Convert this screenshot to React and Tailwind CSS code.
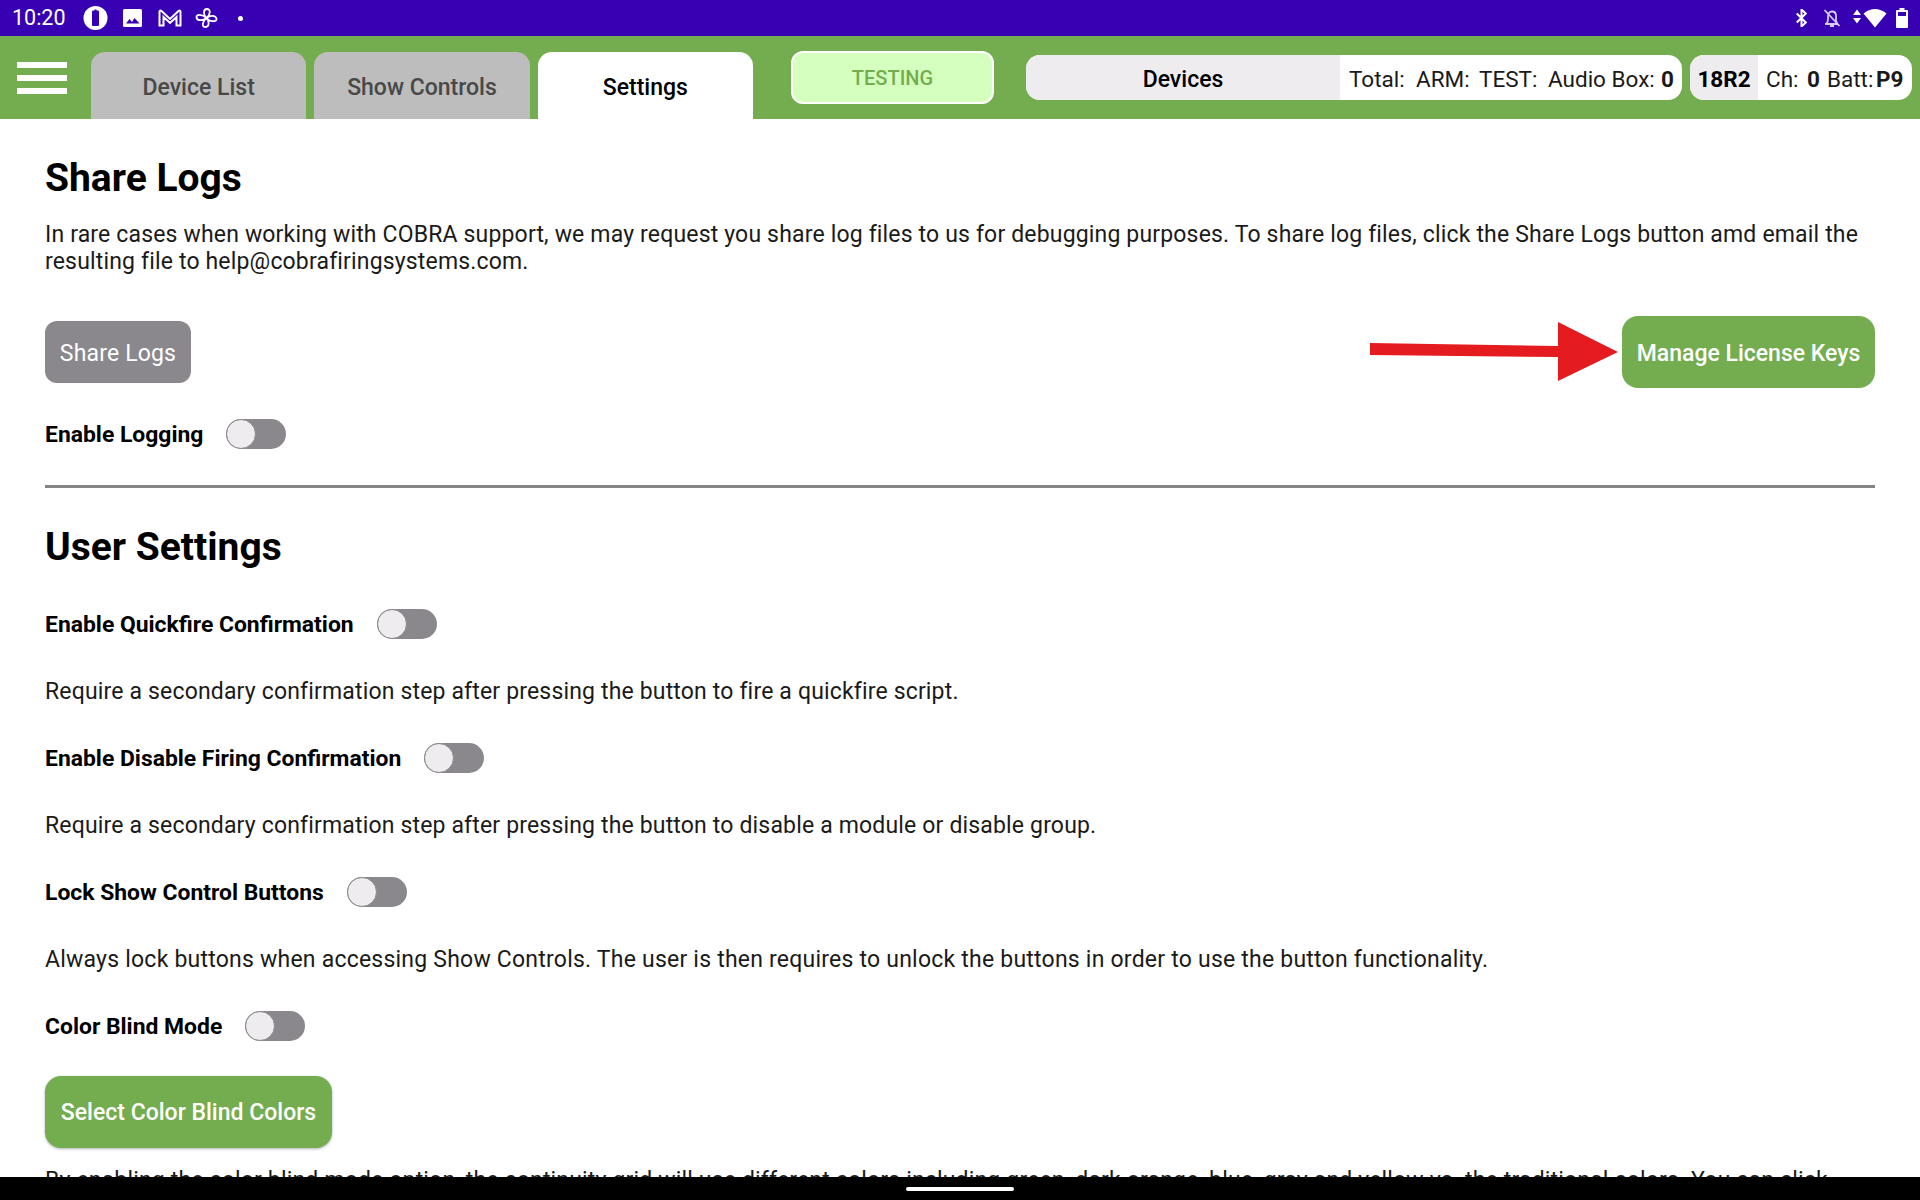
import React from "react";

const Toggle = () => (
  <div className="flex h-[30px] w-[60px] shrink-0 rounded-full bg-[#8a888c]">
    <div className="h-[30px] w-[30px] rounded-full border border-[#8a888c] bg-[#efecef]"></div>
  </div>
);

const ToggleRow = ({ label, className = "" }) => (
  <div className={`flex h-[30px] items-center gap-[23px] ${className}`}>
    <span className="text-[22.9px] font-bold leading-[27px] text-black">{label}</span>
    <Toggle />
  </div>
);

const Desc = ({ children, className = "tracking-[0.165px]" }) => (
  <p className={`text-[23px] leading-[27px] text-[#1a1a1a] ${className}`}>{children}</p>
);

const StatusBar = () => (
  <div className="flex h-9 shrink-0 items-center justify-between bg-[#3700b3] pl-[12px] pr-3 text-white">
    <div className="flex items-center">
      <span className="w-[53px] text-[21.5px] leading-none">10:20</span>
      {/* battery saver */}
      <svg className="ml-[18px]" width="25" height="24" viewBox="0 0 25 24">
        <circle cx="12.5" cy="12" r="12" fill="#fff" />
        <path d="M10 4.5h1.5V3.5h2v1H15a1 1 0 0 1 1 1V19a1 1 0 0 1-1 1h-5a1 1 0 0 1-1-1V5.5a1 1 0 0 1 1-1z" fill="#3700b3" />
      </svg>
      {/* photo */}
      <svg className="ml-[15px]" width="19" height="18" viewBox="0 0 19 18">
        <rect width="19" height="18" rx="1.5" fill="#fff" />
        <path d="M3 14.5l3.5-4.5 2.5 3 2.5-4 5 5.5z" fill="#3700b3" />
      </svg>
      {/* gmail */}
      <svg className="ml-[16px]" width="24" height="18" viewBox="0 0 24 18" fill="none" stroke="#fff" strokeWidth="2">
        <path d="M1.5 16.5V2.5a1 1 0 0 1 1.7-.7L12 10l8.8-8.2a1 1 0 0 1 1.7.7v14h-4V8L12 14 5.500 8v8.500z" />
      </svg>
      {/* fan */}
      <svg className="ml-[13px]" width="23" height="20" viewBox="0 0 23 20" fill="none" stroke="#fff" strokeWidth="1.8">
        <path d="M11.500 10C8 7 8 1 12 1c4 0 3.500 6-.5 9zM11.500 10c3.500-3 9-3 10 .5.800 3.500-6 4-10-.5zM11.500 10c3 3.500 3 9-1 9s-3.500-5.500 1-9zM11.500 10C8 13 2 13 1.500 9.500 1 6 7.500 6 11.500 10z" />
      </svg>
      <div className="ml-[20px] h-[5px] w-[5px] rounded-full bg-white"></div>
    </div>
    <div className="flex items-center">
      {/* bluetooth */}
      <svg width="11" height="18" viewBox="0 0 11 18" fill="none" stroke="#fff" strokeWidth="2">
        <path d="M0.800 4.500l9 9L5.500 17.500V0.500l4.300 4-9 9" />
      </svg>
      {/* bell off */}
      <svg className="ml-[16px]" width="18" height="18" viewBox="0 0 18 18" fill="none" stroke="#fff" strokeWidth="1.800" opacity="0.8">
        <path d="M2 15h12.500M3.500 15c1-1.500 1.500-3 1.500-5V7c0-2.500 1.500-4.500 4-4.500S13 4.500 13 7v5l1.500 3M7 17h4M1.500 1l15 16" />
      </svg>
      {/* wifi with arrows */}
      <svg className="ml-[12px]" width="34" height="19" viewBox="0 0 34 19">
        <path d="M4 0.500L8 6H0zM4 14.500L0 9h8zM10.500 4.500C14 1.500 18 0 22 0s8 1.500 11.500 4.500L22 18.500z" fill="#fff" />
      </svg>
      {/* battery */}
      <svg className="ml-[9px]" width="12" height="20" viewBox="0 0 12 20">
        <path d="M3.500 0h5v2H11a1 1 0 0 1 1 1v16a1 1 0 0 1-1 1H1a1 1 0 0 1-1-1V3a1 1 0 0 1 1-1h2.500z" fill="#fff" />
        <rect x="2" y="4" width="8" height="4" fill="#3700b3" />
      </svg>
    </div>
  </div>
);

const Tab = ({ label, active }) => (
  <div
    className={`flex h-[67px] w-[215.33px] items-center justify-center self-end rounded-t-[14px] pt-[6px] text-[23px] font-medium ${
      active ? "bg-white text-black" : "bg-[#bdbdbd] text-[#484848]"
    }`}
  >
    {label}
  </div>
);

const Header = () => (
  <div className="flex h-[83px] shrink-0 items-center bg-[#74ad4f] pl-[17px]">
    {/* Menu */}
    <div className="flex w-[50px] flex-col gap-[7px]">
      <div className="h-[6px] bg-white"></div>
      <div className="h-[6px] bg-white"></div>
      <div className="h-[6px] bg-white"></div>
    </div>

    {/* Tabs */}
    <div className="ml-[24px] flex h-full gap-2">
      <Tab label="Device List" />
      <Tab label="Show Controls" />
      <Tab label="Settings" active />
    </div>

    <div className="ml-[38px] flex h-[53px] w-[203px] items-center justify-center rounded-[12px] border-2 border-white bg-[#d4ffbf] text-[20px] font-medium text-[#74ad4f]">
      TESTING
    </div>

    {/* Devices */}
    <div className="ml-[32px] flex h-[45px] w-[656px] overflow-hidden rounded-[14px] bg-white text-[22.5px] text-[#1a1a1a]">
      <div className="flex w-[314px] items-center justify-center bg-[#efecef] pt-[5px] text-[23px] font-medium text-black">
        Devices
      </div>
      <div className="flex flex-1 items-center pl-[9px] pt-[4px]">
        <span className="w-[67px]">Total:</span>
        <span className="w-[63px]">ARM:</span>
        <span className="w-[69px]">TEST:</span>
        <span className="w-[113px]">Audio Box:</span>
        <span className="font-bold">0</span>
      </div>
    </div>

    <div className="ml-2 flex h-[45px] w-[222px] overflow-hidden rounded-[14px] bg-white text-[22.5px] text-[#1a1a1a]">
      <div className="flex w-[68px] items-center justify-center bg-[#efecef] pt-[4px] font-bold text-black">18R2</div>
      <div className="flex flex-1 items-center pl-[8px] pt-[4px]">
        <span className="w-[41px]">Ch:</span>
        <span className="w-[20px] font-bold">0</span>
        <span className="w-[49px]">Batt:</span>
        <span className="font-bold">P9</span>
      </div>
    </div>
  </div>
);

const App = () => {
  return (
    <div className="flex h-[1200px] w-[1920px] flex-col overflow-hidden bg-white font-['Roboto',sans-serif]">
      <StatusBar />
      <Header />

      {/* Content */}
      <div className="flex-1 overflow-hidden px-[45px] pt-[37px]">
        <h1 className="text-[39px] font-bold leading-[44px] text-black">Share Logs</h1>
        <div className="mt-[21px]">
          <Desc>
            In rare cases when working with COBRA support, we may request you share log files to us for debugging
            purposes. To share log files, click the Share Logs button amd email the resulting file to
            help@cobrafiringsystems.com.
          </Desc>
        </div>

        <div className="mt-[41px] flex items-center justify-between">
          <button className="flex h-[62px] w-[146px] items-center justify-center rounded-[12px] bg-[#8a888c] pt-[5px] text-[23px] tracking-[0.165px] text-white">
            Share Logs
          </button>
          <div className="flex items-center gap-1">
            {/* Red arrow */}
            <svg width="248" height="60" viewBox="0 0 248 60">
              <path d="M0 21L188 24V0L248 30 188 59V35L0 33z" fill="#e51c1f" />
            </svg>
            <button className="flex h-[72px] w-[253px] items-center justify-center rounded-[16px] bg-[#74ad4f] pt-[5px] text-[23px] font-medium text-white">
              Manage License Keys
            </button>
          </div>
        </div>

        <ToggleRow label="Enable Logging" className="mt-[31px]" />

        <div className="mt-[36px] h-[3px] bg-[#858585]"></div>

        <h1 className="mt-[37px] text-[39px] font-bold leading-[44px] text-black">User Settings</h1>

        <ToggleRow label="Enable Quickfire Confirmation" className="mt-[40px]" />
        <div className="mt-[39px]">
          <Desc>Require a secondary confirmation step after pressing the button to fire a quickfire script.</Desc>
        </div>
        <ToggleRow label="Enable Disable Firing Confirmation" className="mt-[38px]" />
        <div className="mt-[39px]">
          <Desc>Require a secondary confirmation step after pressing the button to disable a module or disable group.</Desc>
        </div>
        <ToggleRow label="Lock Show Control Buttons" className="mt-[38px]" />
        <div className="mt-[39px]">
          <Desc className="tracking-[0.22px]">
            Always lock buttons when accessing Show Controls. The user is then requires to unlock the buttons in order to
            use the button functionality.
          </Desc>
        </div>
        <ToggleRow label="Color Blind Mode" className="mt-[38px]" />

        <button className="mt-[35px] flex h-[72px] w-[287px] items-center justify-center rounded-[16px] bg-[#74ad4f] pt-[3px] text-[23px] font-medium text-white shadow-[0_1px_3px_rgba(0,0,0,0.3)]">
          Select Color Blind Colors
        </button>

        <div className="mt-[19px]">
          <Desc>
            By enabling the color blind mode option, the continuity grid will use different colors including green, dark
            orange, blue, gray and yellow vs. the traditional colors. You can click
          </Desc>
        </div>
      </div>

      {/* Nav bar */}
      <div className="flex h-[23px] shrink-0 items-center justify-center bg-black">
        <div className="h-1 w-[108px] rounded-full bg-white"></div>
      </div>
    </div>
  );
};

export default App;
